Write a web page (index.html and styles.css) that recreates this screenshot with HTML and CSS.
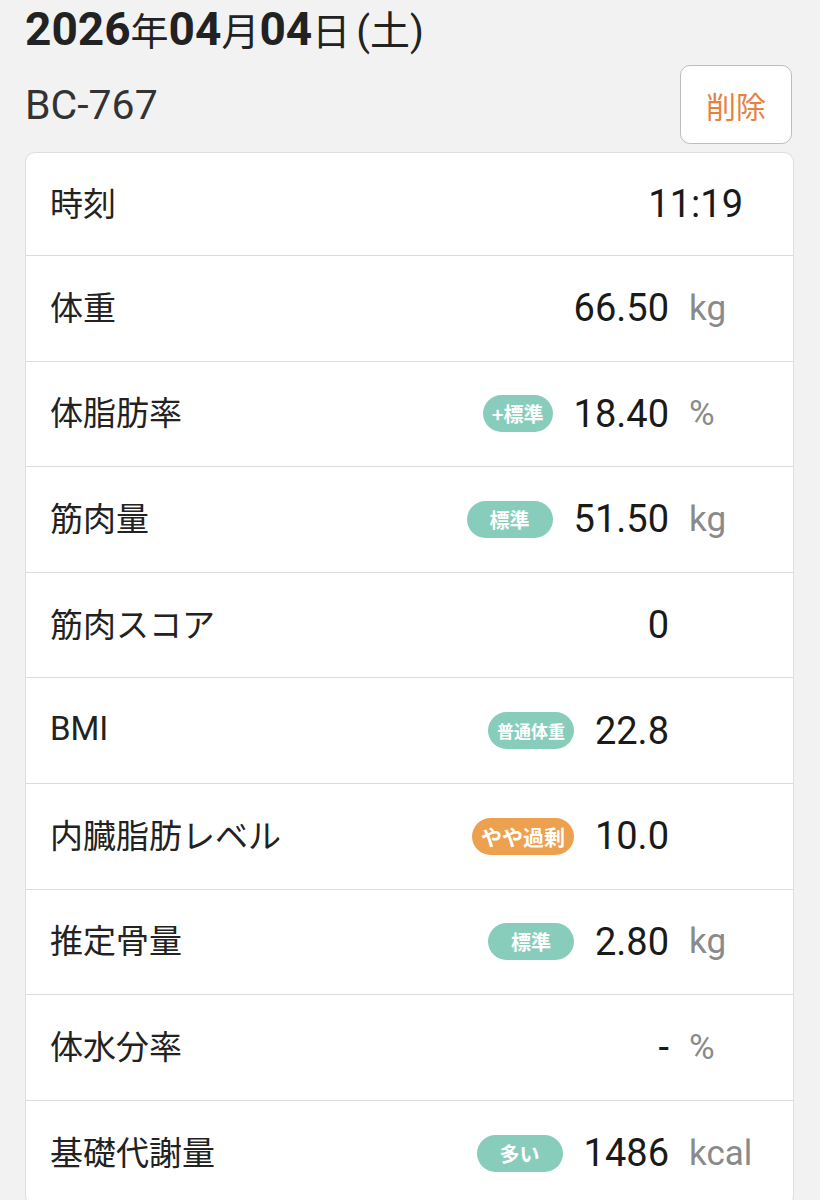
FILE: index.html
```html
<!DOCTYPE html>
<html lang="ja">
<head>
    <meta charset="UTF-8">
    <meta name="viewport" content="width=device-width, initial-scale=1.0">
    <title>測定結果 - BC-767</title>
    <link rel="stylesheet" href="styles.css">
</head>
<body>
    <h1 class="date">
        <span class="num">2026</span><span class="kanji">年</span><span class="num">04</span><span class="kanji">月</span><span class="num">04</span><span class="kanji">日</span><span class="week">(土)</span>
    </h1>

    <div class="device-row">
        <div class="device">BC-767</div>
        <button type="button" class="btn-delete">削除</button>
    </div>

    <div class="card">
        <div class="row">
            <div class="label">時刻</div>
            <div class="value value-time">11:19</div>
        </div>
        <div class="row">
            <div class="label">体重</div>
            <div class="value">66.50</div>
            <div class="unit">kg</div>
        </div>
        <div class="row">
            <div class="label">体脂肪率</div>
            <span class="badge badge-plus">+標準</span>
            <div class="value">18.40</div>
            <div class="unit">%</div>
        </div>
        <div class="row">
            <div class="label">筋肉量</div>
            <span class="badge">標準</span>
            <div class="value">51.50</div>
            <div class="unit">kg</div>
        </div>
        <div class="row">
            <div class="label">筋肉スコア</div>
            <div class="value">0</div>
            <div class="unit"></div>
        </div>
        <div class="row">
            <div class="label">BMI</div>
            <span class="badge badge-small">普通体重</span>
            <div class="value">22.8</div>
            <div class="unit"></div>
        </div>
        <div class="row">
            <div class="label">内臓脂肪レベル</div>
            <span class="badge badge-orange">やや過剰</span>
            <div class="value">10.0</div>
            <div class="unit"></div>
        </div>
        <div class="row">
            <div class="label">推定骨量</div>
            <span class="badge">標準</span>
            <div class="value">2.80</div>
            <div class="unit">kg</div>
        </div>
        <div class="row">
            <div class="label">体水分率</div>
            <div class="value">-</div>
            <div class="unit">%</div>
        </div>
        <div class="row">
            <div class="label">基礎代謝量</div>
            <span class="badge">多い</span>
            <div class="value">1486</div>
            <div class="unit">kcal</div>
        </div>
    </div>
</body>
</html>
```

FILE: styles.css
```css
body {
    font-family: Roboto, "Noto Sans CJK JP", sans-serif;
    margin: 0;
    padding: 6px 26px 0 25px;
    background-color: #f2f2f2;
    color: #222;
}
.date {
    margin: 0;
    font-size: 46px;
    line-height: 46px;
    font-weight: normal;
    white-space: nowrap;
}
.date .num {
    font-weight: bold;
}
.date .kanji {
    font-size: 38px;
}
.date .week {
    font-size: 40px;
    margin-left: 6px;
}
.device-row {
    display: flex;
    align-items: center;
    justify-content: space-between;
    margin-top: 10px;
}
.device {
    font-size: 41px;
    color: #333;
}
.btn-delete {
    width: 112px;
    height: 79px;
    margin-right: 2px;
    background: white;
    border: 1px solid #bdbdbd;
    border-radius: 10px;
    color: #e7813f;
    font-family: "Noto Sans CJK JP", sans-serif;
    font-size: 30px;
    padding: 0;
    cursor: pointer;
}
.card {
    margin-top: 8px;
    background: white;
    border: 1px solid #dedede;
    border-radius: 10px;
}
.row {
    display: flex;
    align-items: center;
    height: 104.6px;
    padding: 0 24px;
    border-bottom: 1px solid #dcdcdc;
}
.row:first-child {
    height: 102px;
}
.row:last-child {
    border-bottom: none;
}
.label {
    flex: 1;
    font-size: 33px;
    padding-bottom: 5px;
    color: #222;
}
.value {
    font-size: 38px;
    text-align: right;
    color: #1a1a1a;
}
.value-time {
    margin-right: 26px;
}
.unit {
    width: 80px;
    padding-left: 20px;
    font-size: 35px;
    color: #8a8a8a;
}
.badge {
    display: inline-flex;
    align-items: center;
    justify-content: center;
    min-width: 68px;
    height: 37px;
    padding: 0 9px;
    margin-right: 21px;
    border-radius: 19px;
    background-color: #88cdbc;
    color: white;
    font-family: "Noto Sans CJK JP", sans-serif;
    font-size: 20px;
    font-weight: bold;
}
.badge-plus {
    min-width: 0;
    padding: 0 9px;
}
.badge-small {
    font-size: 17px;
}
.badge-orange {
    background-color: #eda14f;
    font-size: 21px;
}
```
